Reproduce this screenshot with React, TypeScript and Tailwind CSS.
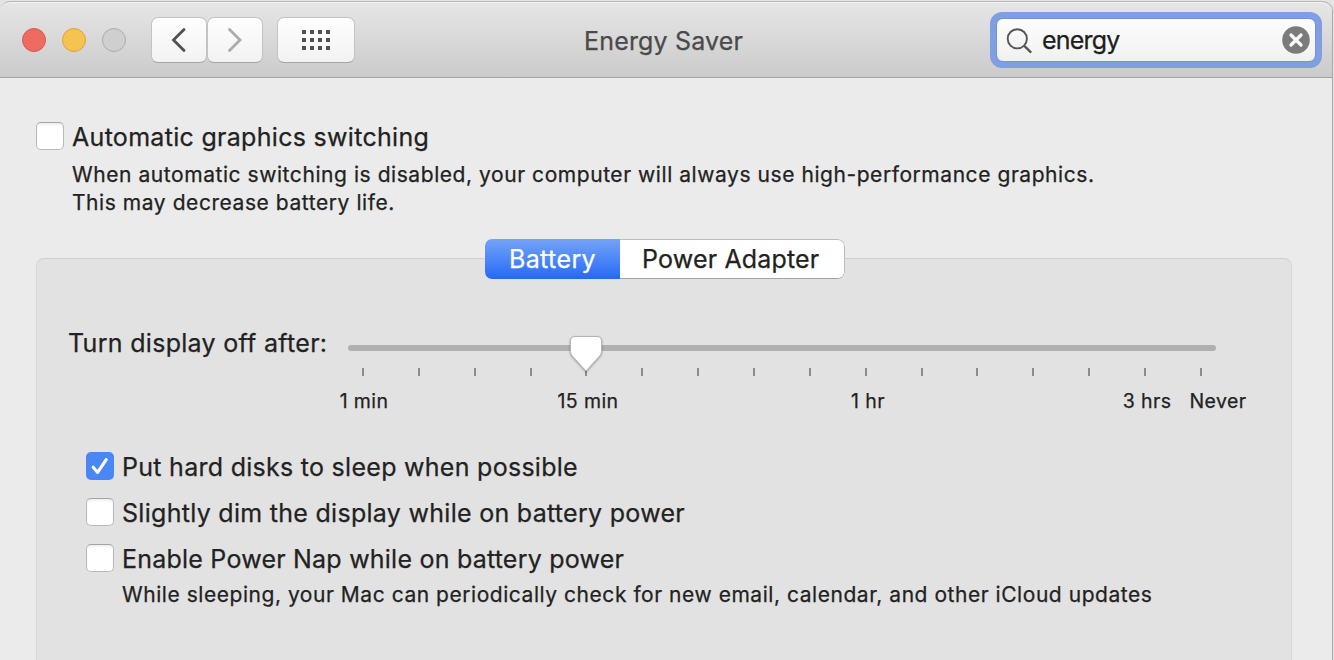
import { clsx } from 'clsx';

type CheckboxProps = {
  checked?: boolean;
};

const TICKS = Array.from({ length: 16 }, (_, i) => i);
const DOTS = Array.from({ length: 12 }, (_, i) => i);

function Checkbox({ checked = false }: CheckboxProps) {
  return (
    <span
      role="checkbox"
      aria-checked={checked}
      className={clsx(
        'flex size-7 shrink-0 items-center justify-center rounded-[5px]',
        checked
          ? 'bg-[#4a86f5]'
          : 'border border-[#b9b9b9] border-t-[#a4a4a4] bg-white shadow-[inset_0_2px_2px_#f0f0f0]',
      )}
    >
      {checked && (
        <svg width="28" height="28" viewBox="0 0 28 28" fill="none">
          <path
            d="M7.2 15.2 L11.6 20.4 L20.2 7.6"
            stroke="white"
            strokeWidth="3.1"
            strokeLinecap="round"
            strokeLinejoin="round"
          />
        </svg>
      )}
    </span>
  );
}

function Toolbar() {
  return (
    <header className="flex h-[77px] items-start rounded-t-[10px] border-t border-b border-t-[#b5b5b5] border-b-[#a3a3a3] bg-linear-to-b from-[#e6e6e6] to-[#cbcbcb] pl-[22px] shadow-[inset_0_1px_0_#f5f5f5]">
      <div className="mt-[26px] flex w-[129px] gap-4">
        <span className="size-6 rounded-full border border-[#d95650] bg-[#ee6b60]" />
        <span className="size-6 rounded-full border border-[#dba53c] bg-[#f6c250]" />
        <span className="size-6 rounded-full border border-[#acacac] bg-[#cfcfcf]" />
      </div>

      <div className="mt-[15px] flex w-[126px]">
        <button
          aria-label="Back"
          className="flex h-[46px] w-[56px] items-center justify-center rounded-[7px] border border-[#c3c3c3] border-b-[#a5a5a5] bg-linear-to-b from-[#fefefe] to-[#f2f2f2]"
        >
          <svg width="16" height="26" viewBox="0 0 16 26" fill="none">
            <path d="M13 2.5 L2.5 13 L13 23.5" stroke="#505050" strokeWidth="2.8" strokeLinecap="round" />
          </svg>
        </button>
        <button
          aria-label="Forward"
          className="flex h-[46px] w-[56px] items-center justify-center rounded-[7px] border border-[#c3c3c3] border-b-[#a5a5a5] bg-linear-to-b from-[#fefefe] to-[#f2f2f2]"
        >
          <svg width="16" height="26" viewBox="0 0 16 26" fill="none">
            <path d="M2.5 2.5 L13 13 L2.5 23.5" stroke="#ababab" strokeWidth="2.8" strokeLinecap="round" />
          </svg>
        </button>
      </div>

      <button
        aria-label="Show all"
        className="mt-[15px] flex h-[46px] w-[78px] items-center justify-center rounded-[7px] border border-[#c3c3c3] border-b-[#a5a5a5] bg-linear-to-b from-[#fefefe] to-[#f2f2f2]"
      >
        <span className="grid grid-cols-4 gap-1">
          {DOTS.map((i) => (
            <span key={i} className="size-1 bg-[#505050]" />
          ))}
        </span>
      </button>

      <h1 className="mt-[20px] flex h-10 w-[635px] items-center justify-start pl-[229px] text-[25px] tracking-[0.17px] text-[#4a4a4a]">
        Energy Saver
      </h1>

      <div className="mt-[10px] flex h-14 w-[332px] rounded-[12px] bg-[#7f9fe2] p-[6px]">
        <div className="flex w-full items-center rounded-[7px] border border-[#6f93dd] bg-linear-to-b from-[#fdfdfd] to-[#f1f1f1] pr-[5px] pl-[8px]">
          <svg width="28" height="28" viewBox="0 0 28 28" fill="none" stroke="#555" className="shrink-0">
            <circle cx="12.3" cy="12.8" r="9.6" strokeWidth="1.9" />
            <path d="M19 19.7 L26.2 26.6" strokeWidth="2.3" />
          </svg>
          <span className="ml-[9px] flex-1 pt-[2px] text-[25px] tracking-[-0.8px] text-[#1e1e1e]">energy</span>
          <svg width="28" height="28" viewBox="0 0 28 28" fill="none">
            <circle cx="14" cy="14" r="13.8" fill="#7b7b7b" />
            <path
              d="M9 9 L19 19 M19 9 L9 19"
              stroke="white"
              strokeWidth="3.2"
              strokeLinecap="round"
            />
          </svg>
        </div>
      </div>
    </header>
  );
}

function DisplaySlider() {
  return (
    <div className="mt-[48px] flex">
      <span className="ml-[31px] h-8 w-[270px] text-[25px] leading-8 tracking-[0.3px] whitespace-nowrap">
        Turn display off after:
      </span>
      <div className="w-[930px] pt-[9px]">
        <div className="relative ml-[10px] h-[36px] w-[868px] pt-[9px]">
          <div className="h-[6px] rounded-full bg-[#b0b0b0]" />
          <svg
            className="absolute top-[-2px] left-[220px] drop-shadow-[0_1px_1px_rgba(0,0,0,0.3)]"
            width="36"
            height="40"
            viewBox="0 0 36 40"
          >
            <path
              d="M7 2.5 H29 Q33.5 2.5 33.5 7 V17.5 Q33.5 20 31.8 21.8 L18 37 L4.2 21.8 Q2.5 20 2.5 17.5 V7 Q2.5 2.5 7 2.5 Z"
              fill="white"
              stroke="#b3b3b3"
              strokeWidth="1"
            />
          </svg>
        </div>
        <div className="mt-[-4px] ml-[24px] flex w-[840px] justify-between">
          {TICKS.map((tick) => (
            <span key={tick} className="h-2 w-[2px] bg-[#8c8c8c]" />
          ))}
        </div>
        <div className="mt-[13px] ml-px flex h-6 text-center text-[19.5px] leading-6 tracking-[0.4px] whitespace-nowrap">
          <span className="w-[50px]">1 min</span>
          <span className="ml-[168px] w-[62px]">15 min</span>
          <span className="ml-[224px] w-[50px]">1 hr</span>
          <span className="ml-[227px] w-[54px]">3 hrs</span>
          <span className="ml-[12px] w-[64px]">Never</span>
        </div>
      </div>
    </div>
  );
}

export default function App() {
  return (
    <div className="h-[660px] w-[1334px] overflow-hidden bg-[#e4e4e4] pt-px font-['Inter',sans-serif] text-[#222222] [-webkit-text-stroke:0.25px_currentColor]">
      <div className="h-[659px] w-[1333px] rounded-t-[10px] border-r border-[#a9a9a9] bg-[#ebebeb]">
        <Toolbar />

        <main className="pl-[36px]">
          <section className="flex h-[161px] gap-2 pt-[44px]">
            <Checkbox />
            <div className="whitespace-nowrap">
              <p className="h-[39px] text-[25px] leading-[30px] tracking-[0.3px]">
                Automatic graphics switching
              </p>
              <p className="text-[21px] leading-7 tracking-[0.56px]">
                When automatic switching is disabled, your computer will always use high-performance graphics.
                <br />
                This may decrease battery life.
              </p>
            </div>
          </section>

          <div className="mt-[19px] h-[420px] w-[1256px] rounded-[8px] border border-[#d8d8d8] border-t-[#cecece] bg-[#e2e2e2]">
            <div className="mt-[-20px] ml-[448px] flex h-[40px] w-[360px] overflow-hidden rounded-[7px] bg-white text-[25px] leading-[38px]">
              <div className="w-[135px] shrink-0 bg-linear-to-b from-[#74a3f7] to-[#2468f6] pt-px text-center tracking-[0.4px] text-white">
                Battery
              </div>
              <div className="flex-1 rounded-r-[7px] border border-l-0 border-[#bdbdbd] border-b-[#a4a4a4] pl-[22px] tracking-[0.17px]">
                Power Adapter
              </div>
            </div>

            <DisplaySlider />

            <div className="mt-[39px] ml-[49px] flex flex-col gap-[18px] text-[25px] leading-7 whitespace-nowrap">
              <div className="flex h-7 gap-[8px]">
                <Checkbox checked />
                <span className="pt-px tracking-[0.28px]">Put hard disks to sleep when possible</span>
              </div>
              <div className="flex h-7 gap-[8px]">
                <Checkbox />
                <span className="pt-px tracking-[0.29px]">Slightly dim the display while on battery power</span>
              </div>
              <div className="flex h-7 gap-[8px]">
                <Checkbox />
                <span className="pt-px tracking-[0.22px]">Enable Power Nap while on battery power</span>
              </div>
            </div>
            <p className="mt-[9px] ml-[85px] text-[21px] leading-7 tracking-[0.54px] whitespace-nowrap">
              While sleeping, your Mac can periodically check for new email, calendar, and other iCloud updates
            </p>
          </div>
        </main>
      </div>
    </div>
  );
}
